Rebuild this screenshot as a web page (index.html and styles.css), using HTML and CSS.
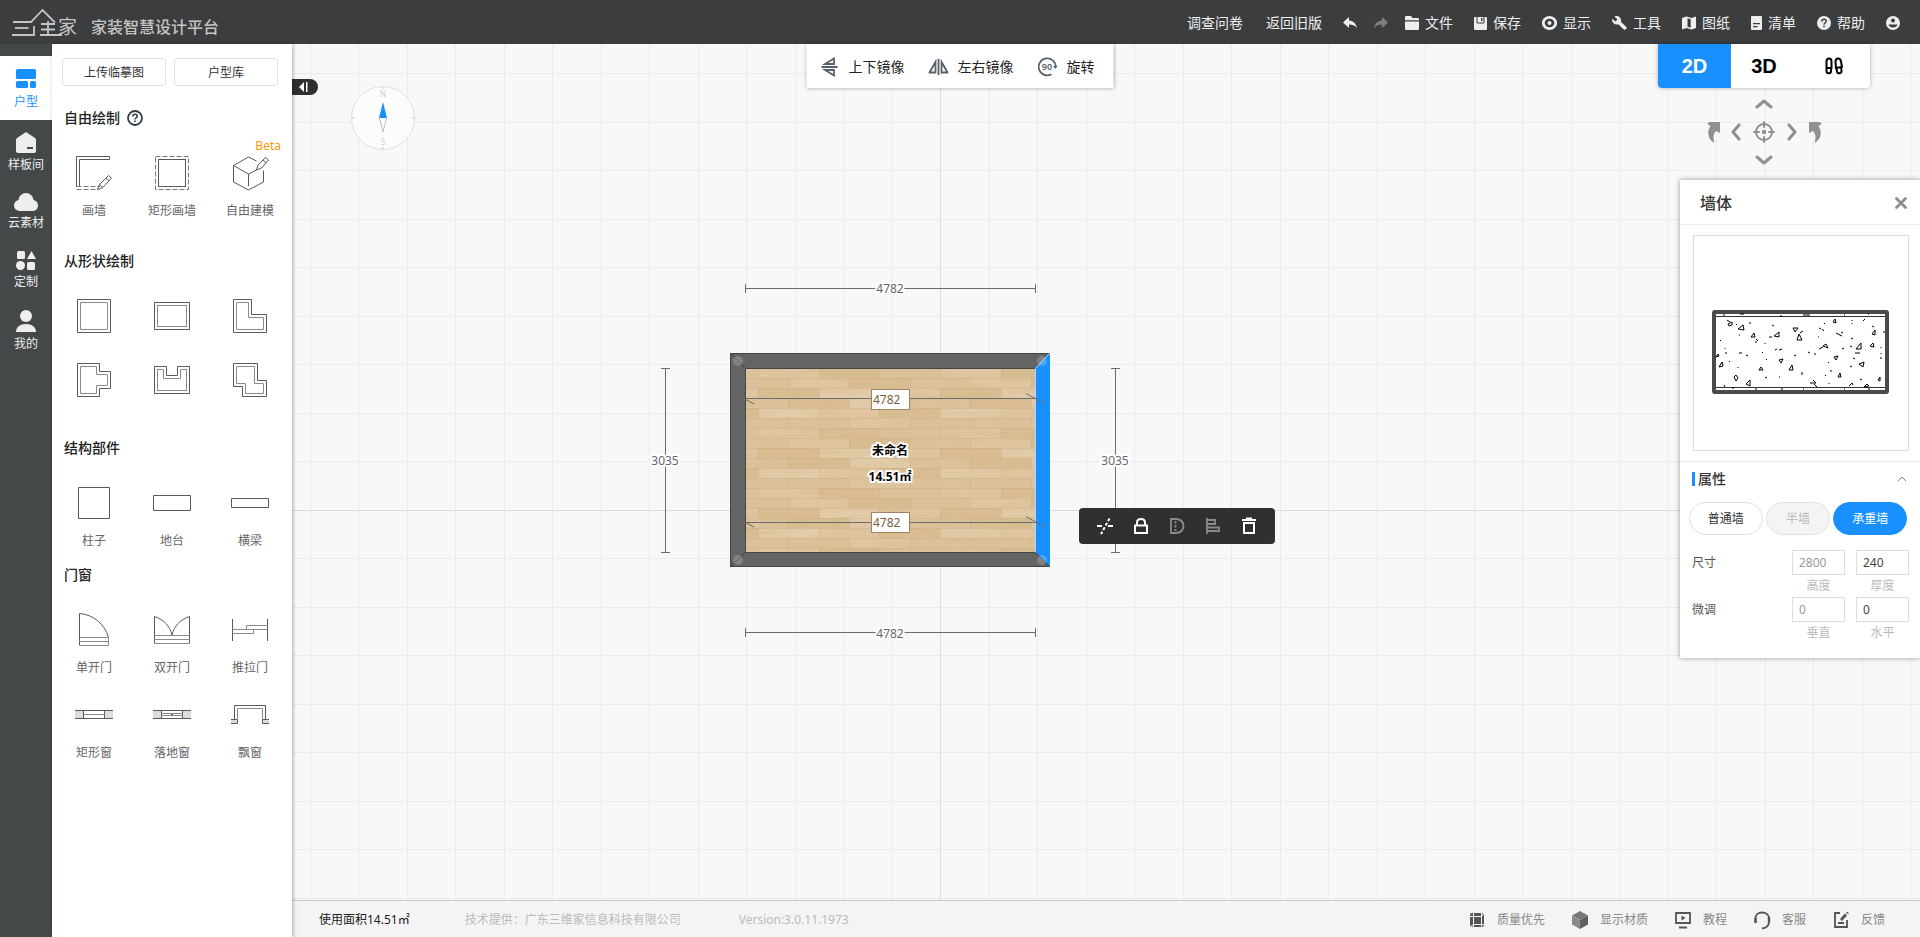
FILE: index.html
```html
<!DOCTYPE html>
<html lang="zh-CN">
<head>
<meta charset="utf-8">
<title>家装智慧设计平台</title>
<link rel="stylesheet" href="styles.css">
</head>
<body>
<div class="app">
  <header class="topbar">
    <a class="brand" href="#">
      <svg class="brand-logo" width="68" height="32" viewBox="0 0 68 32" role="img" aria-label="三维家">
        <g fill="none" stroke="currentColor" stroke-width="1.800">
          <path d="M1 15H19L30.500 3 43 15.500"/>
          <path d="M3 21H16.500"/>
          <path d="M0 28H22V19"/>
          <path d="M29 17H43M29 22.500H43M28 28H50M36 14V28"/>
        </g>
        <text x="46" y="27" font-size="19" fill="currentColor">家</text>
      </svg>
      <span class="brand-name">家装智慧设计平台</span>
    </a>
    <nav class="menu">
      <a class="menu-item" href="#">调查问卷</a>
      <a class="menu-item menu-item--far" href="#">返回旧版</a>
      <button class="menu-item" type="button" aria-label="撤销"><svg width="14" height="14" viewBox="0 0 14 14"><path fill="currentColor" d="M6 1v3.500c4.500.500 7.500 3.500 8 8C12.500 9.500 10 8.500 6 8.500V12L0 6.500z"/></svg></button>
      <button class="menu-item menu-item--near menu-item--off" type="button" aria-label="重做"><svg width="14" height="14" viewBox="0 0 14 14"><path fill="currentColor" d="M8 1v3.500C3.500 5 .5 8 0 12.500 1.500 9.500 4 8.500 8 8.500V12l6-5.500z"/></svg></button>
      <button class="menu-item menu-item--near" type="button"><svg width="14" height="14" viewBox="0 0 14 14"><path fill="currentColor" d="M1 0h5l1.500 2H13q1 0 1 1v1.200H0V1q0-1 1-1zM0 5.500h14V13q0 1-1 1H1q-1 0-1-1z"/></svg>文件</button>
      <button class="menu-item" type="button"><svg width="13" height="14" viewBox="0 0 13 14"><path fill="currentColor" fill-rule="evenodd" d="M1 1h11q1 0 1 1v11q0 1-1 1H1q-1 0-1-1V2q0-1 1-1zM2.500 1v5.500q0 1 1 1h6q1 0 1-1V1h-1v5.500h-6V1zM7 2h1.500v3H7z"/></svg>保存</button>
      <button class="menu-item" type="button"><svg width="15" height="14" viewBox="0 0 15 14"><ellipse cx="7.500" cy="7" rx="6.200" ry="5.600" fill="none" stroke="currentColor" stroke-width="2.800"/><circle cx="7.500" cy="7" r="2" fill="currentColor"/></svg>显示</button>
      <button class="menu-item" type="button"><svg width="15" height="14" viewBox="0 0 15 14"><path fill="currentColor" d="M2.500.5c2-.8 4-.4 5.300 1C9 2.700 9.300 4.300 8.800 5.800l5.500 5.300q.8.800 0 1.600l-1 .9q-.8.700-1.500 0L6.300 8.300C4.500 8.900 2.800 8.600 1.500 7.300.2 6-.2 4.200.5 2.700L3.300 5.400 5.500 3.400z"/></svg>工具</button>
      <button class="menu-item" type="button"><svg width="14" height="14" viewBox="0 0 14 14"><path fill="currentColor" fill-rule="evenodd" d="M0 2 4.500.5 9.500 2 14 .5V12l-4.500 1.500L4.500 12 0 13.500zM5.500 2.300v8.500l3.200 1V3.300z"/></svg>图纸</button>
      <button class="menu-item" type="button"><svg width="11" height="14" viewBox="0 0 11 14"><path fill="currentColor" fill-rule="evenodd" d="M1 0h9q1 0 1 1v12q0 1-1 1H1q-1 0-1-1V1q0-1 1-1zM2 7v1.300h7V7zM2 10v1.300h4.500V10z"/></svg>清单</button>
      <button class="menu-item" type="button"><svg width="14" height="14" viewBox="0 0 14 14"><circle cx="7" cy="7" r="7" fill="currentColor"/><path d="M4.800 5.500C4.800 4 5.700 3.200 7 3.200s2.200.9 2.200 2C9.200 6.800 7 6.800 7 8.700" fill="none" stroke="#3c3d3f" stroke-width="1.500"/><path d="M6.200 9.800h1.600v1.500H6.200z" fill="#3c3d3f"/></svg>帮助</button>
      <button class="menu-item" type="button" aria-label="账户"><svg width="14" height="14" viewBox="0 0 14 14"><circle cx="7" cy="7" r="7" fill="currentColor"/><circle cx="7" cy="4.500" r="2" fill="#3c3d3f"/><path d="M2.500 8.500h9c-.5 2-2.300 3-4.500 3s-4-1-4.500-3z" fill="#3c3d3f"/></svg></button>
    </nav>
  </header>

  <div class="body">
    <nav class="rail">
      <button class="rail-item rail-item--active" type="button"><svg width="20" height="19" viewBox="0 0 20 19" fill="currentColor"><rect width="20" height="10" rx="1.500"/><rect y="12" width="12" height="7" rx="1.500"/><rect x="14" y="12" width="6" height="7" rx="1.500"/></svg>户型</button>
      <button class="rail-item" type="button"><svg width="20" height="21" viewBox="0 0 20 21"><path fill="currentColor" fill-rule="evenodd" d="M10 0 19 6q1 .8 1 2v11q0 2-2 2H2q-2 0-2-2V8Q0 6.800 1 6zM11 15v2h6v-2z"/></svg>样板间</button>
      <button class="rail-item" type="button"><svg width="24" height="18" viewBox="0 0 24 18"><path fill="currentColor" d="M6 18C2 18 0 15 0 12.500 0 9.500 2 7.500 4.500 7 5 3 8 0 12 0s7 3 7.500 7C22 7.500 24 9.500 24 12.500 24 15.500 22 18 18.500 18z"/></svg>云素材</button>
      <button class="rail-item" type="button"><svg width="20" height="19" viewBox="0 0 20 19" fill="currentColor"><rect x="1" width="8" height="8" rx="1.500"/><path d="M15.500 0 20 8h-9z"/><circle cx="4.500" cy="14.500" r="4.500"/><rect x="11" y="11" width="8" height="8" rx="1.500"/></svg>定制</button>
      <button class="rail-item" type="button"><svg width="20" height="22" viewBox="0 0 20 22" fill="currentColor"><circle cx="10" cy="6" r="6"/><path d="M0 22c0-5 4-8 10-8s10 3 10 8z"/></svg>我的</button>
    </nav>

    <aside class="library">
      <div class="library-actions">
        <button class="outline-button" type="button">上传临摹图</button>
        <button class="outline-button" type="button">户型库</button>
      </div>

      <section class="group group--draw">
        <h2 class="group-title">自由绘制
          <svg width="16" height="16" viewBox="0 0 16 16" fill="none" stroke="#333e48"><circle cx="8" cy="8" r="7" stroke-width="1.800"/><path d="M5.800 6.500C5.800 5 6.700 4.300 8 4.300s2.200.8 2.200 2C10.200 7.800 8 7.800 8 9.500M8 10.500v1.500" stroke-width="1.600"/></svg>
        </h2>
        <div class="tiles">
          <button class="tile" type="button"><svg width="40" height="40"><path class="line" d="M2.500 34V3.500h33v3h-30V34"/><path class="line dash" d="M2.500 33.500H26M2.500 36.500H23"/><path class="line" d="M23.500 36.500l2-5 9-9 3 2.500-8.500 9.500zM25.500 31.500l3.500 3M32 25l3 2.500"/></svg>画墙</button>
          <button class="tile" type="button"><svg width="40" height="40"><rect class="line dash" x="3.500" y="3.500" width="33" height="33"/><rect class="line" x="6.500" y="6.500" width="27" height="27"/></svg>矩形画墙</button>
          <button class="tile" type="button"><svg width="40" height="40"><path class="line" d="M26.500 8 18.500 4 3.500 12.500V29l15 8 15-8V17.500M3.500 12.500l15 8.500V33M18.500 21l8-4"/><path class="line" d="M26.500 17l1.500-5 7.500-7.500 3 2.500-7 8zM33 7l3 2.500"/></svg>自由建模<span class="tile-badge">Beta</span></button>
        </div>
      </section>

      <section class="group group--shape">
        <h2 class="group-title">从形状绘制</h2>
        <div class="tiles tiles--plain">
          <button class="tile" type="button" aria-label="正方形"><svg width="40" height="40"><path class="line" d="M3.500 3.500h33v33h-33z"/><path class="line thin" d="M6.500 6.500h27v27h-27z"/></svg></button>
          <button class="tile" type="button" aria-label="矩形"><svg width="40" height="40"><path class="line" d="M2.500 6.500h35v27h-35z"/><path class="line thin" d="M5.500 9.500h29v21h-29z"/></svg></button>
          <button class="tile" type="button" aria-label="L形"><svg width="40" height="40"><path class="line" d="M3.500 3.500h18v15h15v18h-33z"/><path class="line thin" d="M6.500 6.500h12v15h15v12h-27z"/></svg></button>
          <button class="tile" type="button" aria-label="T形"><svg width="40" height="40"><path class="line" d="M3.500 3.500h22v8h11v17h-11v8h-22z"/><path class="line thin" d="M6.500 6.500h16v8h11v11h-11v8h-16z"/></svg></button>
          <button class="tile" type="button" aria-label="U形"><svg width="40" height="40"><path class="line" d="M2.500 6.500h12v9h11v-9h12v27h-35z"/><path class="line thin" d="M5.500 9.500h6v9h17v-9h6v21h-29z"/></svg></button>
          <button class="tile" type="button" aria-label="Z形"><svg width="40" height="40"><path class="line" d="M3.500 3.500h24v17h9v16h-24v-10h-9z"/><path class="line thin" d="M6.500 6.500h18v17h9v10h-18v-10h-9z"/></svg></button>
        </div>
      </section>

      <section class="group group--structure">
        <h2 class="group-title">结构部件</h2>
        <div class="tiles">
          <button class="tile" type="button"><svg width="40" height="40"><path class="line" d="M4.500 4.500h31v31h-31z"/></svg>柱子</button>
          <button class="tile" type="button"><svg width="40" height="40"><path class="line" d="M1.500 12.500h37v15h-37z"/></svg>地台</button>
          <button class="tile" type="button"><svg width="40" height="40"><path class="line" d="M1.500 15.500h37v9h-37z"/></svg>横梁</button>
        </div>
      </section>

      <section class="group group--opening">
        <h2 class="group-title">门窗</h2>
        <div class="tiles">
          <button class="tile" type="button"><svg width="40" height="40"><path class="line" d="M5.500 35.500v-32C19 4.500 31 14 34.500 27.500"/><path class="line thin" d="M5.500 27.500h29v8h-29M5.500 31.500h29"/></svg>单开门</button>
          <button class="tile" type="button"><svg width="40" height="40"><path class="line" d="M2.500 33.500v-27C11 9 18 16 20 25 22 16 29 9 37.500 6.500v27"/><path class="line thin" d="M2.500 25.500h35M2.500 29.500h35M2.500 33.500h35"/></svg>双开门</button>
          <button class="tile" type="button"><svg width="40" height="40"><path class="line" d="M2.500 9v22M37.500 9v22"/><path class="line thin" d="M2.500 19.500h35M16.500 19.500v-4h21M2.500 23.500h21v-4"/></svg>推拉门</button>
          <button class="tile" type="button"><svg width="40" height="40"><path fill="#ddd" d="M1 15h9v9H1zM30 15h9v9h-9z"/><path class="line" d="M1 15.500h38M1 23.500h38M9.500 15v9M30.500 15v9"/><path class="line thin" d="M9.500 19.500h21"/></svg>矩形窗</button>
          <button class="tile" type="button"><svg width="40" height="40"><path fill="#ddd" d="M1 15h9v9H1zM30 15h9v9h-9z"/><path class="line" d="M1 15.500h38M1 23.500h38M9.500 15v9M30.500 15v9M19 19.500h2"/><path class="line thin" d="M9.500 18.500h21M9.500 20.500h21"/></svg>落地窗</button>
          <button class="tile" type="button"><svg width="40" height="40"><path fill="#ddd" d="M1 24h6v5H1zM33 24h6v5h-6z"/><path class="line" d="M4.500 24.500v-14h31v14M1 24.500h6.500v4H1M39 24.500h-6.500v4H39"/><path class="line thin" d="M7.500 24.500v-11h25v11"/></svg>飘窗</button>
        </div>
      </section>
    </aside>

    <main class="workspace">
      <div class="stage">
        <svg class="plan" width="100%" height="100%">
          <defs>
            <pattern id="grid" x="940" y="510" width="97" height="97" patternUnits="userSpaceOnUse">
              <path fill="#ebebeb" d="M0 0h1v97H0zM49 0h1v97h-1zM0 0h97v1H0zM0 48h97v1H0z"/>
            </pattern>
            <pattern id="planks" x="758" y="368" width="182" height="60" patternUnits="userSpaceOnUse">
              <rect width="182" height="60" fill="#dcc29c"/>
              <path fill="#dfc6a1" d="M0 0h61v10H0zM30 10h61v10H30zM121 20h61v10h-61zM61 40h60v10H61zM91 50h61v10H91z"/>
              <path fill="#d8bc92" d="M61 0h60v10H61zM0 20h61v10H0zM91 10h61v10H91zM30 30h61v10H30zM121 40h61v10h-61z"/>
              <path fill="#e1cba8" d="M61 20h60v10H61zM0 40h61v10H0zM91 30h61v10H91z"/>
              <path fill="none" stroke="#c6a677" stroke-opacity=".4" d="M0 .5h182M0 10.500h182M0 20.500h182M0 30.500h182M0 40.500h182M0 50.500h182M.5 0v10M61.500 0v10M121.500 0v10M30.500 10v10M91.500 10v10M152.500 10v10M.5 20v10M61.500 20v10M121.500 20v10M30.500 30v10M91.500 30v10M152.500 30v10M.5 40v10M61.500 40v10M121.500 40v10M30.500 50v10M91.500 50v10M152.500 50v10"/>
            </pattern>
            <filter id="grain" x="0" y="0" width="100%" height="100%">
              <feTurbulence type="fractalNoise" baseFrequency=".025 .16" numOctaves="3" seed="8"/>
              <feColorMatrix values="0 0 0 0 .68  0 0 0 0 .5  0 0 0 0 .28  1.600 0 0 0 -.6"/>
            </filter>
          </defs>
          <g transform="translate(-292 -44)">
            <rect x="292" y="44" width="100%" height="100%" fill="url(#grid)"/>
            <path fill="#dcdcdc" d="M940 0h1v2000h-1zM0 510h4000v1H0z"/>

            <g class="dimension">
              <path d="M745.500 288.500h290M745.500 284v9M1035.500 284v9"/>
              <path d="M745.500 632.500h290M745.500 628v9M1035.500 628v9"/>
              <path d="M665.500 368.500v184M661 368.500h9M661 552.500h9"/>
              <path d="M1115.500 368.500v184M1111 368.500h9M1111 552.500h9"/>
              <text x="890" y="293">4782</text>
              <text x="890" y="638">4782</text>
              <text x="665" y="465">3035</text>
              <text x="1115" y="465">3035</text>
            </g>

            <rect x="745" y="368" width="291" height="185" fill="url(#planks)"/>
            <rect x="745" y="368" width="291" height="185" filter="url(#grain)" opacity=".6"/>

            <g fill="#646464" stroke="#444" stroke-linejoin="round">
              <path d="M730.500 353.500h319l-14 15h-290z"/>
              <path d="M730.500 353.500l15 15v184l-15 14z"/>
              <path d="M730.500 566.500l15-14h290l14 14z"/>
            </g>
            <path fill="#1890ff" d="M1050 353l-15 15v184l15 15z"/>
            <path fill="none" stroke="#a9d5ff" d="M1049.500 353.500l-14 15v184"/>
            <path fill="none" stroke="#444" d="M1035.500 552.500l14 14"/>
            <g fill="#fff" fill-opacity=".2"><circle cx="738" cy="361" r="5"/><circle cx="1042" cy="361" r="5"/><circle cx="738" cy="560" r="5"/><circle cx="1042" cy="560" r="5"/></g>

            <g fill="none" stroke="#6b6b6b">
              <path d="M745.500 398.500h290M736 394l18 10M1026 393.500l18 10"/>
              <path d="M745.500 522.500h290M736 517l18 10M1026 516.500l18 10"/>
            </g>
            <g class="room-label">
              <text x="890" y="455">未命名</text>
              <text x="890" y="481">14.51㎡</text>
            </g>

            <g fill="none" stroke="#e0e0e0">
              <circle cx="383" cy="118" r="31.500" fill="#fcfcfc"/>
              <path stroke-width="2" d="M383 87v2M383 147v2M352 118h2M412 118h2"/>
              <path stroke="#b9c2ca" d="M379.500 118l3.500 14 3.500-14"/>
              <path fill="#1890ff" stroke="none" d="M379 118l4-16 4 16z"/>
            </g>
            <g class="compass-label"><text x="383" y="97">N</text><text x="383" y="145">S</text></g>
          </g>
        </svg>

        <input class="length-input length-input--top" aria-label="上方墙长" value="4782">
        <input class="length-input length-input--bottom" aria-label="下方墙长" value="4782">

        <button class="collapse" type="button" aria-label="收起"><svg width="10" height="10" viewBox="0 0 10 10" fill="#fff"><path d="M5 0v10L0 5zM7 0h1.500v10H7z"/></svg></button>

        <div class="wall-tools">
          <button type="button" aria-label="拆分"><svg width="18" height="18" viewBox="0 0 18 18" fill="none" stroke="#fff" stroke-width="2"><path d="M1 9h5M12 9h5"/><path d="M13.500 1.500 5 17" stroke-dasharray="3 2"/></svg></button>
          <button type="button" aria-label="锁定"><svg width="18" height="18" viewBox="0 0 18 18" fill="none" stroke="#fff" stroke-width="2"><path d="M3 8.500h12V16H3zM5 8V5.500C5 3 6.500 2 9 2s4 1 4 3.500V8"/></svg></button>
          <button type="button" aria-label="弧形" disabled><svg width="18" height="18" viewBox="0 0 18 18" fill="none" stroke="#8b8b8b" stroke-width="1.800"><path d="M8 2H3v14h5"/><path d="M7.500 4v10" stroke-dasharray="2.500 1.500"/><path d="M8 2c4.500 0 7.500 3 7.500 7S12.500 16 8 16"/></svg></button>
          <button type="button" aria-label="对齐" disabled><svg width="18" height="18" viewBox="0 0 18 18" fill="none" stroke="#8b8b8b" stroke-width="1.800"><path d="M3 1v16M3 3h8v4H3M3 10.500h12V14H3"/></svg></button>
          <button type="button" aria-label="删除"><svg width="18" height="18" viewBox="0 0 18 18" fill="none" stroke="#fff" stroke-width="2"><path d="M4 6h10v10H4zM2 3h14M6 1.500h6"/></svg></button>
        </div>
      </div>

      <footer class="status">
        <span class="status-area">使用面积14.51㎡</span>
        <span class="status-vendor">技术提供：广东三维家信息科技有限公司</span>
        <span class="status-version">Version:3.0.11.1973</span>
        <div class="status-links">
          <button type="button"><svg width="24" height="24" viewBox="0 0 24 24"><rect x="5" y="5" width="14" height="14" rx="2" fill="#555"/><path d="M5 8.500h11.500M8.500 8.500V19M16.500 5v14M8.500 16.500H19M5 19l3.500-2.500M16.500 8.500 19 5M8.500 8.500V5" stroke="#f4f4f4" fill="none"/></svg>质量优先</button>
          <button type="button"><svg width="24" height="24" viewBox="0 0 24 24"><path fill="#777" d="M12 3l8 4.500-8 4.500-8-4.500z"/><path fill="#8a8a8a" d="M4 7.500l8 4.500v9l-8-4.500z"/><path fill="#606060" d="M20 7.500 12 12v9l8-4.500z"/></svg>显示材质</button>
          <button type="button"><svg width="24" height="24" viewBox="0 0 24 24"><path d="M5 5h14v10H5zM8 19.500h8" fill="none" stroke="#555" stroke-width="1.800"/><path d="M10.500 7.500v5l4-2.500z" fill="#555"/></svg>教程</button>
          <button type="button"><svg width="24" height="24" viewBox="0 0 24 24" fill="none" stroke="#555" stroke-width="1.800"><path d="M5.500 14.500v-4C5.500 7 8 4.500 12 4.500s7 2.500 7 6v3c0 4-2.500 6.500-7 7"/><path d="M5.500 10v5M19 9.500v5" stroke-width="2.400"/></svg>客服</button>
          <button type="button"><svg width="24" height="24" viewBox="0 0 24 24" fill="none" stroke="#555" stroke-width="1.800"><path d="M11 5H6v14h12v-7M9 15h6"/><path d="M12 12l5-5.500M18 5.500l.8-1" stroke-width="2.800"/></svg>反馈</button>
        </div>
      </footer>
    </main>
  </div>

  <div class="transform-bar">
    <button type="button"><svg width="20" height="20" viewBox="0 0 20 20" fill="none" stroke="#56616b" stroke-width="1.800"><path d="M2 10h16"/><path d="M14.500 1.500v5.500H5.500zM14.500 18.500V13H5.500z"/></svg>上下镜像</button>
    <button type="button"><svg width="20" height="20" viewBox="0 0 20 20" fill="none" stroke="#56616b" stroke-width="1.800"><path d="M10 2v16"/><path d="M7 5v10.500H1zM13 5v10.500h6z"/></svg>左右镜像</button>
    <button type="button"><svg width="20" height="20" viewBox="0 0 20 20" fill="none" stroke="#56616b" stroke-width="1.800"><path d="M14 17.200A8.500 8.500 0 1 1 18.200 10"/><path d="M15.500 9h4.500l-2 3z" fill="#56616b" stroke="none"/><text x="9.500" y="13" font-size="9" font-weight="600" text-anchor="middle" fill="#56616b" stroke="none">90</text></svg>旋转</button>
  </div>

  <div class="view-switch">
    <button class="view view--active" type="button">2D</button>
    <button class="view" type="button">3D</button>
    <button class="view" type="button" aria-label="漫游"><svg width="20" height="18" viewBox="0 0 20 18" fill="none" stroke="#000" stroke-width="2"><path d="M2.500 11V4.500c0-4 5-4 5 0V11zM2.500 11v3c0 3 4.500 3 4.500 0v-3M12 11l-.5-6c0-4.500 4.800-4.500 5.500-.5l1 5.500zM12.500 11l.5 3.500c.5 3 5 2 4.500-1l-.5-3.500"/></svg></button>
  </div>

  <div class="orbit">
    <svg width="120" height="68" viewBox="0 0 120 68" fill="none" stroke="#909090" stroke-width="3" stroke-linecap="round" stroke-linejoin="round">
      <path d="M53 9l7-6 7 6M53 59l7 6 7-6M35 27l-6 7 6 7M85 27l6 7-6 7"/>
      <circle cx="60" cy="34" r="8" stroke-width="2"/>
      <path d="M60 24v5M60 39v5M50 34h5M65 34h5" stroke-width="2"/>
      <circle cx="60" cy="34" r="2.200" fill="#909090" stroke="none"/>
      <path fill="#909090" stroke="none" d="M3.500 26 5 24h11v11l-4-2c-3 3-3 7-1.500 12C4 42 2.500 34 6.500 28zM117.500 26 116 24h-11v11l4-2c3 3 3 7 1.500 12 6.500-3 8-11 4-17z"/>
    </svg>
  </div>

  <aside class="inspector">
    <header class="inspector-head">
      <h2>墙体</h2>
      <button type="button" aria-label="关闭"><svg width="14" height="14" viewBox="0 0 14 14"><path d="M2.500 2.500l9 9M11.500 2.500l-9 9" stroke="#8c8c8c" stroke-width="2.800" stroke-linecap="round"/></svg></button>
    </header>
    <div class="preview">
      <svg width="177" height="84" viewBox="0 0 177 84">
        <rect x="2" y="2" width="173" height="80" rx="1" fill="#fff" stroke="#4a4a4a" stroke-width="4"/>
        <path d="M4 6.500h169M4 77.500h169" stroke="#333"/>
        <path fill="none" stroke="#000" d="M15 10l3 2M17 16l3-1v-3l-4 2zM26 19l5-4 1 5zM24 14l1 1M39 27l3-4 1 4zM44 29l2 2M62 26l5-4v5zM57 27h3M81 18h5l-3 4zM87 24l3 6h-5zM88 23l3-2M121 12l2-3 1 4zM111 36l3-2 2 4zM107 39l4-2M144 39l5-6v6zM160 24l3-4v5zM158 36l3-3 1 4zM122 47l4-1-2 4zM147 54l5-2-1 5zM67 50l4-1-2 4zM77 60l3-5 1 5zM47 60l2-3 2 3zM7 57l3-5 1 4zM4 47l3-1-1-2zM22 67l2-2 2 3-2 3zM34 74l4-4v6zM90 62v3M98 73h6l-3-3M102 74l3 3M126 67l2-4 1 4zM166 70l2-3v4zM152 77l3-3 2 2zM137 76l3-3 1 2M12 77l1-2M37 13h2M60 15l2 1M110 19l2 2M112 14l1-1M107 18l2 1M124 23l6 3M129 23l2-1M140 10v1M140 13v1M151 11l2-2M160 16l2 1M171 22h2M8 30l1 1M13 38v1M13 43h2M27 25h1M27 43h3M34 45l2 1M50 43l1-1M43 32h2M53 33v1M63 40l2-1M67 40l3-1M82 46l2-1M96 42l2 1M102 44h2M116 53l1-1M130 39l2-1M138 36l2 1M139 29l2-1M143 43h5M141 48l2 1M138 57l2-1M55 49l-1 1M26 57v1M17 51l1 1M53 68l2-1M67 67h1M113 66l1-1M118 61h2M117 73v1M148 69l2 1M169 43v1M168 48h2M169 37v1M106 27h1M11 5h2M28 4h4M69 5v2M91 5h7M132 5h1M156 4h1M20 78h2M43 79h2M69 79h2M91 79h1M132 79h1M156 79h2"/>
      </svg>
    </div>
    <section class="props">
      <h3 class="props-title">属性<svg width="10" height="6" viewBox="0 0 10 6"><path d="M1 5l4-4 4 4" fill="none" stroke="#777"/></svg></h3>
      <div class="pills">
        <button class="pill pill--wide" type="button">普通墙</button>
        <button class="pill" type="button" disabled>半墙</button>
        <button class="pill pill--wide pill--active" type="button">承重墙</button>
      </div>
      <div class="field-row">
        <span class="field-name">尺寸</span>
        <label class="field"><input value="2800" disabled>高度</label>
        <label class="field"><input value="240">厚度</label>
      </div>
      <div class="field-row">
        <span class="field-name">微调</span>
        <label class="field"><input value="0" disabled>垂直</label>
        <label class="field"><input value="0">水平</label>
      </div>
    </section>
  </aside>
</div>
</body>
</html>
```
FILE: styles.css
```css
* {
  box-sizing: border-box;
}

body {
  margin: 0;
  font-family: "Noto Sans", "Noto Sans CJK SC", sans-serif;
  font-size: 12px;
  line-height: 20px;
  color: #333;
}

button,
input {
  margin: 0;
  padding: 0;
  border: 0;
  background: none;
  font: inherit;
  color: inherit;
}

a {
  color: inherit;
  text-decoration: none;
}

h2,
h3 {
  margin: 0;
}

svg {
  display: block;
  flex: none;
}

.app {
  position: relative;
  display: flex;
  flex-direction: column;
  height: 100vh;
  overflow: hidden;
}

/* Top bar */
.topbar {
  display: flex;
  flex: none;
  align-items: center;
  justify-content: space-between;
  height: 44px;
  padding: 2px 20px 0 12px;
  background: #3c3d3f;
  color: #eee;
}

.brand {
  display: flex;
  align-items: center;
  gap: 11px;
  color: #c4c4c4;
}

.brand-logo {
  overflow: visible;
}

.brand-name {
  padding-top: 7px;
  font-size: 16px;
  font-weight: 500;
}

.menu {
  display: flex;
  align-items: center;
  font-size: 14px;
}

.menu-item {
  display: flex;
  align-items: center;
  gap: 6px;
  margin-left: 21px;
}

.menu-item--near {
  margin-left: 17px;
}

.menu-item--far {
  margin-left: 23px;
}

.menu-item--off {
  color: #808080;
}

/* Main row */
.body {
  display: flex;
  flex: 1;
  min-height: 0;
}

.rail {
  flex: none;
  width: 52px;
  padding-top: 12px;
  background: #444849;
  color: #eee;
}

.rail-item {
  display: flex;
  flex-direction: column;
  align-items: center;
  gap: 3px;
  width: 100%;
  padding: 12px 0 7px;
  line-height: 18px;
}

.rail-item--active {
  gap: 5px;
  padding: 13px 0 9px;
  background: #fff;
  color: #1890ff;
}

.library {
  position: relative;
  z-index: 1;
  flex: none;
  width: 240px;
  background: #fff;
  box-shadow: 1px 0 4px rgba(0, 0, 0, 0.3);
}

.library-actions {
  display: flex;
  gap: 8px;
  padding: 14px 14px 0 10px;
}

.outline-button {
  flex: 1;
  height: 28px;
  padding-top: 1px;
  border: 1px solid #dfdfdf;
  border-radius: 3px;
}

.group--draw {
  padding-top: 20px;
}

.group--shape {
  padding-top: 28px;
}

.group--structure {
  padding-top: 36px;
}

.group--opening {
  padding-top: 12px;
}

.group-title {
  display: flex;
  align-items: center;
  gap: 7px;
  padding-left: 12px;
  margin-bottom: 23px;
  font-size: 14px;
  font-weight: 500;
  line-height: 24px;
  color: #222;
}

.tiles {
  display: grid;
  grid-template-columns: repeat(3, 1fr);
  row-gap: 17px;
  padding: 0 3px;
}

.tiles--plain {
  row-gap: 24px;
}

.tile {
  position: relative;
  display: flex;
  flex-direction: column;
  align-items: center;
  gap: 8px;
  color: #666;
}

.tile-badge {
  position: absolute;
  top: -17px;
  right: 8px;
  color: #ff9800;
}

.line {
  fill: none;
  stroke: #5a5a5a;
}

.thin {
  stroke: #8a8a8a;
}

.dash {
  stroke: #777;
  stroke-dasharray: 5 2;
}

/* Drawing area */
.workspace {
  display: flex;
  flex: 1;
  flex-direction: column;
  min-width: 0;
}

.stage {
  position: relative;
  flex: 1;
  min-height: 0;
  overflow: hidden;
  background: #f8f8f8;
}

.plan {
  position: absolute;
  inset: 0;
}

.dimension path {
  stroke: #6b6b6b;
  fill: none;
}

.dimension text {
  fill: #666;
  stroke: #fff;
  stroke-width: 4px;
  paint-order: stroke;
  text-anchor: middle;
}

.room-label {
  font-weight: 700;
}

.room-label text {
  fill: #000;
  stroke: #fff;
  stroke-width: 4px;
  stroke-linejoin: round;
  paint-order: stroke;
  text-anchor: middle;
}

.compass-label text {
  font-size: 8px;
  fill: #ccc;
  text-anchor: middle;
}

.length-input {
  position: absolute;
  left: 579px;
  width: 39px;
  height: 21px;
  padding: 0 1px;
  border: 1px solid #a5835f;
  background: #fff;
  color: #7a5c3e;
}

.length-input--top {
  top: 345px;
}

.length-input--bottom {
  top: 468px;
}

.collapse {
  position: absolute;
  top: 35px;
  left: 0;
  display: flex;
  align-items: center;
  width: 26px;
  height: 16px;
  padding-left: 7px;
  border-radius: 0 8px 8px 0;
  background: #303030;
}

.wall-tools {
  position: absolute;
  top: 464px;
  left: 787px;
  display: flex;
  padding: 0 8px;
  border-radius: 4px;
  background: #303030;
}

.wall-tools button {
  display: grid;
  place-items: center;
  width: 36px;
  height: 36px;
}

/* Status bar */
.status {
  display: flex;
  flex: none;
  align-items: center;
  height: 37px;
  padding: 2px 35px 0 27px;
  border-top: 1px solid #ccc;
  background: #f4f4f4;
  color: #bbb;
}

.status-area {
  color: #222;
}

.status-vendor {
  margin-left: 55px;
}

.status-version {
  margin-left: 58px;
}

.status-links {
  display: flex;
  gap: 23px;
  margin-left: auto;
  color: #888;
}

.status-links button {
  display: flex;
  align-items: center;
  gap: 8px;
}

/* Floating panels */
.transform-bar {
  position: absolute;
  top: 44px;
  left: 50%;
  display: flex;
  gap: 24px;
  height: 44px;
  padding: 2px 19px 0 13px;
  transform: translateX(-50%);
  background: #fff;
  box-shadow: 0 0 4px rgba(0, 0, 0, 0.35);
  font-size: 14px;
  color: #222;
}

.transform-bar button {
  display: flex;
  align-items: center;
  gap: 9px;
}

.view-switch {
  position: absolute;
  top: 44px;
  right: 50px;
  display: flex;
  height: 44px;
  border-radius: 0 0 4px 4px;
  overflow: hidden;
  background: #fff;
  box-shadow: 0 0 4px rgba(0, 0, 0, 0.3);
}

.view {
  display: grid;
  place-items: center;
  width: 66px;
  font-family: "Liberation Sans", sans-serif;
  font-size: 20px;
  font-weight: 700;
  color: #000;
}

.view:last-child {
  width: 73px;
}

.view--active {
  width: 73px;
  background: #1890ff;
  color: #fff;
}

.orbit {
  position: absolute;
  top: 98px;
  right: 96px;
}

.inspector {
  position: absolute;
  top: 180px;
  right: 0;
  width: 240px;
  padding-bottom: 14px;
  background: #fff;
  box-shadow: 0 0 5px rgba(0, 0, 0, 0.4);
}

.inspector-head {
  display: flex;
  align-items: center;
  justify-content: space-between;
  height: 45px;
  padding: 2px 12px 0 20px;
  border-bottom: 1px solid #eee;
}

.inspector-head h2 {
  font-size: 16px;
  font-weight: 500;
}

.preview {
  display: grid;
  place-items: center;
  height: 216px;
  padding: 18px 2px 0 0;
  margin: 10px 11px 10px 13px;
  border: 1px solid #ddd;
}

.props {
  padding: 5px 11px 0 12px;
  border-top: 1px solid #eee;
}

.props-title {
  display: flex;
  align-items: center;
  justify-content: space-between;
  padding: 0 2px 0 6px;
  font-size: 14px;
  font-weight: 500;
  line-height: 24px;
  background: linear-gradient(#1890ff, #1890ff) 0 50% / 3px 14px no-repeat;
}

.pills {
  display: flex;
  gap: 3px;
  margin: 11px 2px 15px -3px;
}

.pill {
  flex: 65;
  height: 33px;
  border: 1px solid #e0e0e0;
  border-radius: 17px;
}

.pill--wide {
  flex: 74;
}

.pill:disabled {
  background: #f4f4f4;
  color: #bbb;
}

.pill--active {
  border-color: #1890ff;
  background: #1890ff;
  color: #fff;
}

.field-row {
  display: flex;
  gap: 11px;
}

.field-name {
  flex: 1;
  line-height: 25px;
  color: #555;
}

.field {
  display: flex;
  flex-direction: column;
  align-items: center;
  gap: 1px;
  width: 53px;
  height: 47px;
  color: #bbb;
}

.field input {
  width: 100%;
  height: 25px;
  padding: 0 6px;
  border: 1px solid #ddd;
  background: #fff;
  color: #444;
}

.field input:disabled {
  color: #999;
}
```
